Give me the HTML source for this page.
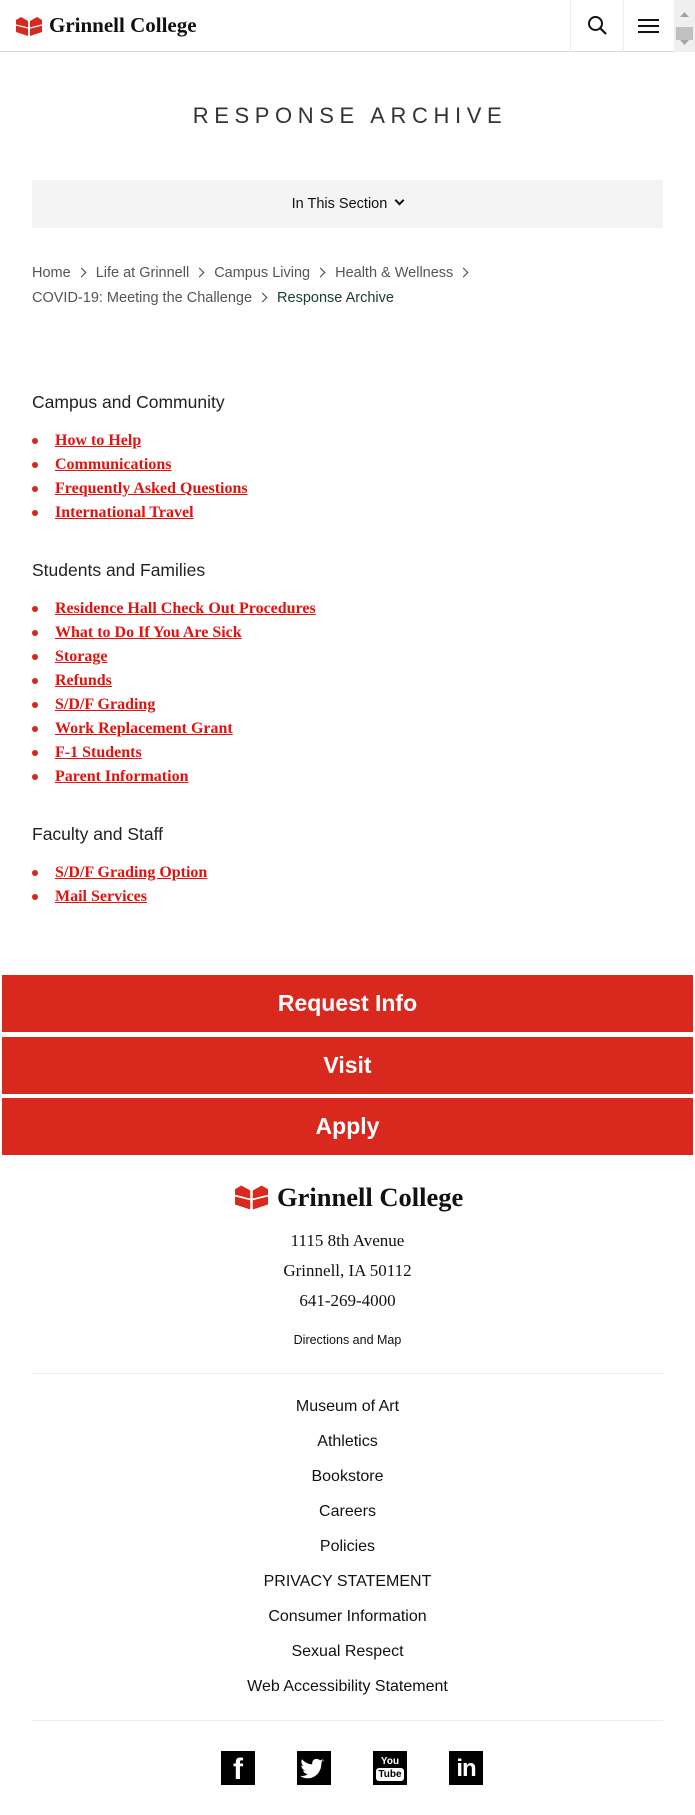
<!DOCTYPE html>
<html><head><meta charset="utf-8"><style>
*{margin:0;padding:0;box-sizing:border-box}
body{width:695px;height:1815px;position:relative;background:#fff;font-family:"Liberation Sans",sans-serif;color:#222;overflow:hidden}
.a{position:absolute}
.hdr{top:0;left:0;width:695px;height:52px;border-bottom:1px solid #d8d8d8}
.ser{font-family:"Liberation Serif",serif}
.li{position:absolute;left:32px;font-family:"Liberation Serif",serif;font-weight:bold;font-size:16px;color:#e0130e;text-decoration:underline;white-space:nowrap;line-height:18px}
.li::before{content:"";position:absolute;left:0;top:6px;width:6px;height:6px;border-radius:50%;background:#d9261c}
.li span{margin-left:23px}
.h2{position:absolute;left:32px;font-size:17.5px;color:#222;line-height:22px}
.btn{position:absolute;left:2px;width:691px;height:57px;background:#d9281d;color:#fff;font-weight:bold;font-size:23px;text-align:center;line-height:57px}
.fl{position:absolute;left:0;width:695px;text-align:center;font-size:16px;color:#111;line-height:20px}
.bc{position:absolute;left:32px;font-size:14.5px;color:#555;white-space:nowrap;line-height:18px}
.chev{display:inline-block;width:7px;height:7px;border-right:1.6px solid #444;border-top:1.6px solid #444;transform:rotate(45deg);margin:0 11px 1px 7px}
.soc{position:absolute;top:1751px;width:34px;height:34px;background:#000;color:#fff;text-align:center}
</style></head><body>
<div class="a hdr"></div>
<svg class="a" style="left:16px;top:17px" width="26" height="19" viewBox="0 0 26 19"><path d="M0 3 L5 0 L12 4 L12 19 L0 15 Z" fill="#d9281d"/><path d="M26 3 L21 0 L14 4 L14 19 L26 15 Z" fill="#d9281d"/><path d="M0 8 L12 11 M26 8 L14 11" stroke="#fff" stroke-width="1.3"/></svg>
<div class="a ser" style="left:49px;top:13px;font-size:21px;font-weight:bold;color:#111">Grinnell College</div>
<div class="a" style="left:570px;top:0;width:1px;height:52px;background:#eee"></div>
<div class="a" style="left:623px;top:0;width:1px;height:52px;background:#eee"></div>
<svg class="a" style="left:587px;top:15px" width="21" height="21" viewBox="0 0 21 21"><circle cx="8.5" cy="8.5" r="6.5" fill="none" stroke="#111" stroke-width="2"/><path d="M13.5 13.5 L19 19" stroke="#111" stroke-width="2.2"/></svg>
<svg class="a" style="left:638px;top:19px" width="21" height="14"><rect y="0" width="21" height="2" fill="#111"/><rect y="6" width="21" height="2" fill="#111"/><rect y="12" width="21" height="2" fill="#111"/></svg>
<div class="a" style="left:674px;top:0;width:21px;height:52px;background:#efefef"></div>
<div class="a" style="left:676px;top:27px;width:17px;height:13px;background:#c1c1c1"></div>
<svg class="a" style="left:679px;top:11px" width="11" height="36"><path d="M1 6 L5.5 1 L10 6Z M1 29 L5.5 34 L10 29Z" fill="#a3a3a3"/></svg>

<div class="a" style="left:0;top:103px;width:695px;text-align:center;font-size:22px;letter-spacing:5.6px;color:#333;padding-left:5px">RESPONSE ARCHIVE</div>
<div class="a" style="left:32px;top:180px;width:631px;height:48px;background:#f4f4f4;text-align:center;line-height:48px;font-size:14.5px;color:#111">In This Section <span style="display:inline-block;width:7px;height:7px;border-right:2px solid #111;border-bottom:2px solid #111;transform:rotate(45deg);margin:0 0 4px 5px"></span></div>

<div class="bc" style="top:264px">Home<span class="chev"></span>Life at Grinnell<span class="chev"></span>Campus Living<span class="chev"></span>Health &amp; Wellness<span class="chev"></span></div>
<div class="bc" style="top:289px">COVID-19: Meeting the Challenge<span class="chev"></span><span style="color:#1b3b2b">Response Archive</span></div>

<div class="h2" style="top:391px">Campus and Community</div>
<div class="li" style="top:432px"><span>How to Help</span></div>
<div class="li" style="top:456px"><span>Communications</span></div>
<div class="li" style="top:480px"><span>Frequently Asked Questions</span></div>
<div class="li" style="top:504px"><span>International Travel</span></div>

<div class="h2" style="top:559px">Students and Families</div>
<div class="li" style="top:600px"><span>Residence Hall Check Out Procedures</span></div>
<div class="li" style="top:624px"><span>What to Do If You Are Sick</span></div>
<div class="li" style="top:648px"><span>Storage</span></div>
<div class="li" style="top:672px"><span>Refunds</span></div>
<div class="li" style="top:696px"><span>S/D/F Grading</span></div>
<div class="li" style="top:720px"><span>Work Replacement Grant</span></div>
<div class="li" style="top:744px"><span>F-1 Students</span></div>
<div class="li" style="top:768px"><span>Parent Information</span></div>

<div class="h2" style="top:823px">Faculty and Staff</div>
<div class="li" style="top:864px"><span>S/D/F Grading Option</span></div>
<div class="li" style="top:888px"><span>Mail Services</span></div>

<div class="btn" style="top:975px">Request Info</div>
<div class="btn" style="top:1037px">Visit</div>
<div class="btn" style="top:1098px">Apply</div>

<svg class="a" style="left:235px;top:1185px" width="33" height="25" viewBox="0 0 26 19"><path d="M0 3 L5 0 L12 4 L12 19 L0 15 Z" fill="#d9281d"/><path d="M26 3 L21 0 L14 4 L14 19 L26 15 Z" fill="#d9281d"/><path d="M0 8 L12 11 M26 8 L14 11" stroke="#fff" stroke-width="1.3"/></svg>
<div class="a ser" style="left:277px;top:1182px;font-size:26.5px;font-weight:bold;color:#111">Grinnell College</div>
<div class="fl ser" style="top:1231px;font-size:17px">1115 8th Avenue</div>
<div class="fl ser" style="top:1261px;font-size:17px">Grinnell, IA 50112</div>
<div class="fl ser" style="top:1291px;font-size:17px">641-269-4000</div>
<div class="fl" style="top:1330px;font-size:12.5px">Directions and Map</div>
<div class="a" style="left:32px;top:1373px;width:631px;height:1px;background:#eee"></div>
<div class="fl" style="top:1397px">Museum of Art</div>
<div class="fl" style="top:1432px">Athletics</div>
<div class="fl" style="top:1467px">Bookstore</div>
<div class="fl" style="top:1502px">Careers</div>
<div class="fl" style="top:1537px">Policies</div>
<div class="fl" style="top:1572px">PRIVACY STATEMENT</div>
<div class="fl" style="top:1607px">Consumer Information</div>
<div class="fl" style="top:1642px">Sexual Respect</div>
<div class="fl" style="top:1677px">Web Accessibility Statement</div>
<div class="a" style="left:32px;top:1720px;width:631px;height:1px;background:#eee"></div>

<div class="soc" style="left:221px;font-weight:bold;font-size:30px;line-height:38px">f</div>
<svg class="a" style="left:297px;top:1751px" width="34" height="34" viewBox="0 0 34 34"><rect width="34" height="34" fill="#000"/><path d="M27 10 c-1 .5-2 .7-3 .8 1-.6 1.8-1.6 2.1-2.7-1 .6-2 1-3.2 1.2-2-2.1-5.6-1.8-7.1.6-.6 1-.8 2.3-.5 3.5-4-.2-7.7-2.1-10.2-5.2-1.4 2.3-.7 5.3 1.5 6.8-.8 0-1.6-.3-2.3-.6 0 2.4 1.7 4.5 4 5-.7.2-1.5.2-2.3.1.7 2 2.6 3.4 4.7 3.5-2.1 1.7-4.8 2.4-7.5 2.1 9.7 6 21.6-.8 21.2-13.5 1-.7 1.9-1.6 2.6-2.6z" fill="#fff"/></svg>
<div class="soc" style="left:373px;font-size:10px;line-height:11px;font-weight:bold;padding-top:5px">You<br><span style="display:inline-block;background:#fff;color:#000;border-radius:3px;padding:1px 2px;margin-top:1px">Tube</span></div>
<div class="soc" style="left:449px;font-weight:bold;font-size:24px;line-height:36px;letter-spacing:-1px">in</div>
</body></html>
